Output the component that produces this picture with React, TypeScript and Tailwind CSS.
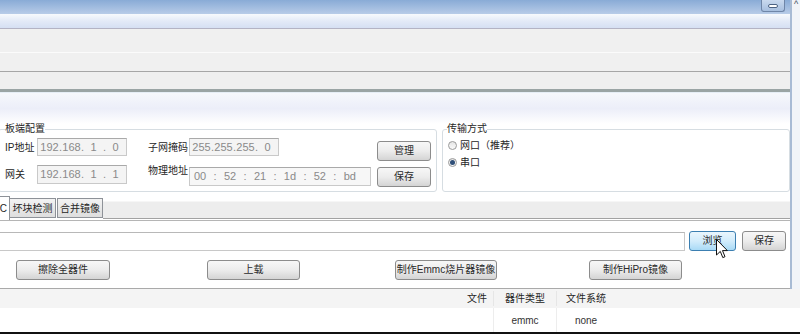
import clsx from "clsx";
import type { ReactNode } from "react";

const Btn = ({ children, className, hover }: { children: ReactNode; className?: string; hover?: boolean }) => (
  <div
    className={clsx(
      "relative flex items-center justify-center rounded-[3px] border text-[10px] leading-none text-[#2a2a2a]",
      hover
        ? "border-[#3c7fb1] bg-linear-to-b from-[#eaf6fd] via-[#d2ecfb] to-[#a9daf6]"
        : "border-[#8c8c8c] bg-linear-to-b from-[#f7f7f7] via-[#ececec] to-[#d4d4d4]",
      className
    )}
  >
    {children}
  </div>
);

const IpBox = ({ parts, className }: { parts: string[]; className?: string }) => (
  <div
    className={clsx(
      "flex h-[18px] w-[90px] items-center border border-[#c9c9c9] border-t-[#a9a9a9] bg-[#f4f4f4] pl-[2px] text-[11px] text-[#8a8a8a]",
      className
    )}
  >
    {parts.map((p, i) => (
      <div key={i} className="flex items-center">
        <span className="w-[19px] text-center">{p}</span>
        {i < 3 && <span className="w-[3px]">.</span>}
      </div>
    ))}
  </div>
);

const Radio = ({ checked, label }: { checked?: boolean; label: string }) => (
  <div className="flex h-[17px] items-center gap-[3px]">
    <span className="flex h-[9px] w-[9px] items-center justify-center rounded-full border border-[#9a9a9a] bg-linear-to-b from-[#e6e6e6] to-[#fafafa]">
      {checked && <span className="h-[5px] w-[5px] rounded-full bg-[#2f4f78]" />}
    </span>
    <span>{label}</span>
  </div>
);

export default function App() {
  return (
    <div className="flex h-[336px] w-[800px] flex-col overflow-hidden bg-white font-['Liberation_Sans','Noto_Sans_CJK_SC',sans-serif] text-[10px] text-[#262626]">
      <div className="flex h-[289px]">
        <div className="flex w-[790px] flex-col">
          {/* title bar */}
          <div className="flex h-[14px] justify-end bg-linear-to-b from-[#89abd6] to-[#b8cce8]">
            <div className="mr-[5px] flex h-[12px] w-[24px] items-center justify-center rounded-b-[3px] border border-t-0 border-[#6f86a8] bg-linear-to-b from-[#c9d9ee] to-[#a7bfdf]">
              <div className="h-[4px] w-[10px] rounded-full border border-[#4b6283] bg-white" />
            </div>
          </div>
          <div className="h-[15px] border-b border-[#b3b3c4] bg-linear-to-b from-[#f7fafd] via-[#e3eaf7] to-[#d5dff3]" />
          <div className="h-[24px] border-b border-[#fbfbfb] bg-[#f0f0f0]" />
          <div className="h-[19px] border-b border-[#a6a6a6] bg-[#f0f0f0]" />
          <div className="h-[20px] border-b-[3px] border-[#9aa4a4] bg-[#efefef]" />
          <div className="h-[32px] border-t border-[#e6eef6] bg-linear-to-b from-[#f6f8fc] via-[#eceef9] to-white" />

          {/* config groups */}
          <div className="flex h-[71px] items-start bg-white">
            <fieldset className="ml-[-2px] h-[68px] w-[439px] rounded-[3px] border border-[#d6dde2] px-0">
              <legend className="ml-[6px] text-[10px] leading-[10px]">板端配置</legend>
              <div className="flex pt-[4px]">
                <div className="flex flex-col pl-[6px]">
                  <div className="flex items-center">
                    <span className="w-[32px]">IP地址</span>
                    <IpBox parts={["192", "168", "1", "0"]} />
                    <span className="ml-[21px] w-[41px]">子网掩码</span>
                    <IpBox parts={["255", "255", "255", "0"]} />
                  </div>
                  <div className="mt-[7px] flex items-center">
                    <span className="w-[32px]">网关</span>
                    <IpBox parts={["192", "168", "1", "1"]} className="h-[19px]" />
                    <span className="ml-[21px] w-[41px] self-start">物理地址</span>
                    <div className="mt-[4px] flex h-[19px] w-[182px] items-center justify-between border border-[#c9c9c9] border-t-[#a9a9a9] bg-[#f7f7f7] px-[4px] pr-[14px] text-[11px] text-[#8a8a8a]">
                      {["00", ":", "52", ":", "21", ":", "1d", ":", "52", ":", "bd"].map((t, i) => (
                        <span key={i}>{t}</span>
                      ))}
                    </div>
                  </div>
                </div>
                <div className="ml-[6px] flex flex-col gap-[6px] pt-[3px]">
                  <Btn className="h-[20px] w-[54px]">管理</Btn>
                  <Btn className="h-[20px] w-[54px]">保存</Btn>
                </div>
              </div>
            </fieldset>
            <fieldset className="ml-[5px] h-[68px] flex-1 rounded-[3px] border border-[#d6dde2] px-0">
              <legend className="ml-[4px] text-[10px] leading-[10px]">传输方式</legend>
              <div className="flex flex-col pl-[5px] pt-[3px]">
                <Radio label="网口（推荐）" />
                <Radio checked label="串口" />
              </div>
            </fieldset>
          </div>

          {/* tabs */}
          <div className="flex h-[25px] items-end">
            <div className="z-10 flex h-[24px] w-[10px] items-center justify-end border-r border-t border-[#8e9298] bg-white pr-[2px] text-[10px]">
              C
            </div>
            <div className="mb-[2px] flex h-[20px] w-[46px] items-center justify-center border border-l-0 border-[#8e9298] bg-linear-to-b from-[#f3f3f3] to-[#dedede]">
              坏块检测
            </div>
            <div className="mb-[2px] ml-[1px] flex h-[20px] w-[46px] items-center justify-center border border-[#8e9298] bg-linear-to-b from-[#f3f3f3] to-[#dedede]">
              合并镜像
            </div>
            <div className="mb-[1px] h-[18px] flex-1 border-b border-t border-[#a2a2a2] border-t-[#f6f6f6] bg-[#ededed]" />
          </div>

          {/* panel */}
          <div className="flex flex-1 flex-col border-b border-t border-[#a9a9a9] border-t-[#b5b5b5] bg-white">
            <div className="mt-[10px] flex items-center">
              <div className="ml-[-2px] h-[19px] w-[687px] border border-[#c8c8c8] border-t-[#b8b8b8]" />
              <Btn hover className="ml-[4px] h-[20px] w-[47px]">
                浏览
                <svg className="absolute left-[26px] top-[7px]" width="12" height="20" viewBox="0 0 12 20">
                  <path d="M0.5 0.5 L0.5 16 L4.3 12.4 L6.8 18.6 L9 17.7 L6.5 11.6 L11.4 11.6 Z" fill="white" stroke="#111" strokeWidth="1" />
                </svg>
              </Btn>
              <Btn className="ml-[6px] h-[20px] w-[44px]">保存</Btn>
            </div>
            <div className="mt-[9px] flex">
              <Btn className="ml-[16px] h-[20px] w-[94px]">擦除全器件</Btn>
              <Btn className="ml-[97px] h-[20px] w-[93px]">上载</Btn>
              <Btn className="ml-[95px] h-[20px] w-[102px]">制作Emmc烧片器镜像</Btn>
              <Btn className="ml-[92px] h-[20px] w-[93px]">制作HiPro镜像</Btn>
            </div>
          </div>
        </div>

        {/* right edge */}
        <div className="flex w-[10px] flex-col border-l-2 border-[#a8bbd4] bg-[#f1f4f8]">
          <div className="flex h-[12px] items-start justify-center text-[9px] leading-[9px] text-[#3a4a60]">^</div>
        </div>
      </div>

      {/* file table */}
      <div className="flex h-[19px] items-center bg-[#f4f4f4]">
        <div className="w-[494px] border-r border-[#e6e6e6] pr-[6px] text-right">文件</div>
        <div className="w-[63px] border-r border-[#e6e6e6] text-center">器件类型</div>
        <div className="w-[58px] text-center">文件系统</div>
      </div>
      <div className="flex h-[26px] items-center border-b-2 border-[#111] text-[10px] text-[#333]">
        <div className="h-full w-[494px] border-r border-[#ededed]" />
        <div className="flex h-full w-[63px] items-center justify-center border-r border-[#ededed]">emmc</div>
        <div className="w-[58px] text-center">none</div>
      </div>
    </div>
  );
}
